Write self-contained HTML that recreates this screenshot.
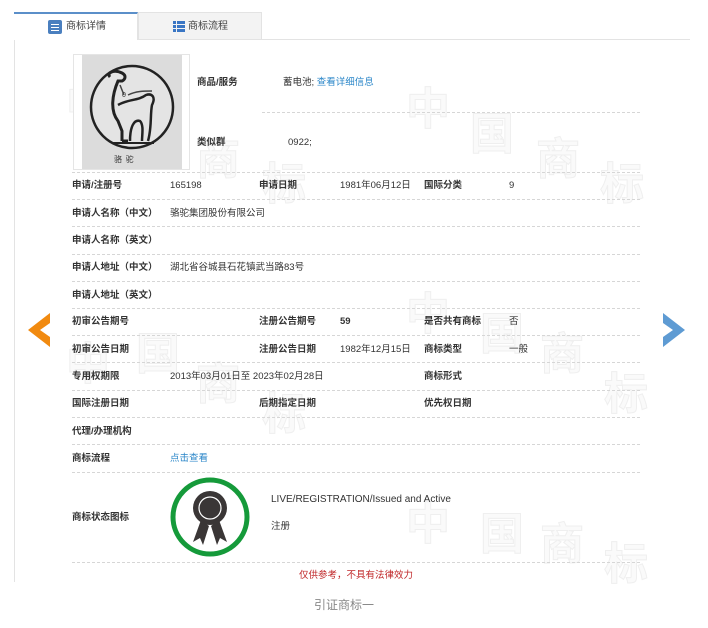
<!DOCTYPE html>
<html><head><meta charset="utf-8"><style>
*{margin:0;padding:0;box-sizing:border-box}
body{width:708px;height:628px;background:#fff;font-family:"Liberation Sans","Noto Sans CJK SC",sans-serif;font-size:9.5px;color:#333;position:relative;overflow:hidden}
.a{position:absolute;white-space:nowrap;line-height:13px}
.b{font-weight:bold;color:#333}
.l{position:absolute;border-top:1px dashed #d6d6d6;height:0}
.wm{position:absolute;color:#fafafa;font-size:44px;font-weight:bold;line-height:50px;-webkit-text-stroke:1px #efefef}
</style></head><body>
<div class="a" style="left:14px;top:39px;width:676px;height:543px;border-left:1px solid #e3e3e3;border-top:1px solid #e3e3e3;background:#fff"></div>
<div class="wm" style="left:66px;top:80px">中</div>
<div class="wm" style="left:130px;top:110px">国</div>
<div class="wm" style="left:196px;top:135px">商</div>
<div class="wm" style="left:262px;top:160px">标</div>
<div class="wm" style="left:406px;top:85px">中</div>
<div class="wm" style="left:470px;top:110px">国</div>
<div class="wm" style="left:536px;top:135px">商</div>
<div class="wm" style="left:600px;top:160px">标</div>
<div class="wm" style="left:66px;top:340px">中</div>
<div class="wm" style="left:136px;top:330px">国</div>
<div class="wm" style="left:196px;top:360px">商</div>
<div class="wm" style="left:262px;top:390px">标</div>
<div class="wm" style="left:406px;top:290px">中</div>
<div class="wm" style="left:480px;top:310px">国</div>
<div class="wm" style="left:540px;top:330px">商</div>
<div class="wm" style="left:604px;top:370px">标</div>
<div class="wm" style="left:406px;top:500px">中</div>
<div class="wm" style="left:480px;top:510px">国</div>
<div class="wm" style="left:540px;top:520px">商</div>
<div class="wm" style="left:604px;top:540px">标</div>
<!-- tabs -->
<div class="a" style="left:14px;top:12px;width:124px;height:28px;background:#fff;border-top:2px solid #5b8fc9;border-right:1px solid #e3e3e3"></div>
<div class="a" style="left:138px;top:12px;width:124px;height:27px;background:#f3f3f3;border:1px solid #e3e3e3;border-bottom:none"></div>
<div class="a" style="left:48px;top:20px;width:14px;height:14px;background:#4a7fbf;border-radius:2px"></div>
<div class="a" style="left:51px;top:24px;width:8px;height:1px;background:#fff;box-shadow:0 3px 0 #fff,0 6px 0 #fff"></div>
<div class="a" style="left:66px;top:20px;font-size:10px;color:#444">商标详情</div>
<div class="a" style="left:173px;top:21px;width:12px;height:11px;background:repeating-linear-gradient(#3a76c4 0 3px,transparent 3px 4px)"></div>
<div class="a" style="left:176px;top:21px;width:1px;height:11px;background:#f3f3f3"></div>
<div class="a" style="left:188px;top:20px;font-size:10px;color:#444">商标流程</div>
<!-- image -->
<div class="a" style="left:73px;top:54px;width:117px;height:116px;border:1px solid #e5e5e5;background:#fff"></div>
<div class="a" style="left:82px;top:55px;width:100px;height:114px;background:#dcdcdc"></div>
<svg class="a" style="left:82px;top:55px" width="100" height="114"><circle cx="50" cy="52" r="41" fill="#e4e4e4" stroke="#222" stroke-width="2.5"/>
<path d="M28 22 C24 18 32 14 40 18 C44 20 44 24 40 26 L36 26 C30 40 28 56 36 66 L40 76 L40 86 M40 86 L46 86" fill="none" stroke="#222" stroke-width="3"/>
<path d="M36 50 C46 44 56 46 64 40 C70 38 74 42 70 50 C68 60 70 72 66 86 M48 86 C48 72 52 64 58 66 C62 70 60 80 60 86" fill="none" stroke="#222" stroke-width="2.5"/>
<path d="M38 30 L42 40 M46 40 C54 36 62 36 70 36" fill="none" stroke="#444" stroke-width="1.5"/>
<text x="40" y="42" font-size="7" fill="#333">0</text>
<path d="M30 88 L72 88" stroke="#222" stroke-width="2"/>
<text x="32" y="107" font-size="8" fill="#333" font-family="Noto Sans CJK SC">骆 &#160;驼</text></svg>
<!-- lines -->
<div class="l" style="left:262px;top:112px;width:378px"></div>
<div class="l" style="left:72px;top:172px;width:568px"></div>
<div class="l" style="left:72px;top:199px;width:568px"></div>
<div class="l" style="left:72px;top:226px;width:568px"></div>
<div class="l" style="left:72px;top:254px;width:568px"></div>
<div class="l" style="left:72px;top:281px;width:568px"></div>
<div class="l" style="left:72px;top:308px;width:568px"></div>
<div class="l" style="left:72px;top:335px;width:568px"></div>
<div class="l" style="left:72px;top:362px;width:568px"></div>
<div class="l" style="left:72px;top:390px;width:568px"></div>
<div class="l" style="left:72px;top:417px;width:568px"></div>
<div class="l" style="left:72px;top:444px;width:568px"></div>
<div class="l" style="left:72px;top:472px;width:568px"></div>
<div class="l" style="left:72px;top:562px;width:568px"></div>
<div class="a b" style="left:197px;top:76px">商品/服务</div>
<div class="a" style="left:283px;top:76px">蓄电池; <span style="color:#2a86c8">查看详细信息</span></div>
<div class="a b" style="left:197px;top:136px">类似群</div>
<div class="a" style="left:288px;top:136px">0922;</div>
<div class="a b" style="left:72px;top:179px">申请/注册号</div><div class="a" style="left:170px;top:179px">165198</div>
<div class="a b" style="left:259px;top:179px">申请日期</div><div class="a" style="left:340px;top:179px">1981年06月12日</div>
<div class="a b" style="left:424px;top:179px">国际分类</div><div class="a" style="left:509px;top:179px">9</div>
<div class="a b" style="left:72px;top:207px">申请人名称（中文）</div><div class="a" style="left:170px;top:207px">骆驼集团股份有限公司</div>
<div class="a b" style="left:72px;top:234px">申请人名称（英文）</div>
<div class="a b" style="left:72px;top:261px">申请人地址（中文）</div><div class="a" style="left:170px;top:261px">湖北省谷城县石花镇武当路83号</div>
<div class="a b" style="left:72px;top:289px">申请人地址（英文）</div>
<div class="a b" style="left:72px;top:315px">初审公告期号</div>
<div class="a b" style="left:259px;top:315px">注册公告期号</div><div class="a b" style="left:340px;top:315px">59</div>
<div class="a b" style="left:424px;top:315px">是否共有商标</div><div class="a" style="left:509px;top:315px">否</div>
<div class="a b" style="left:72px;top:343px">初审公告日期</div>
<div class="a b" style="left:259px;top:343px">注册公告日期</div><div class="a" style="left:340px;top:343px">1982年12月15日</div>
<div class="a b" style="left:424px;top:343px">商标类型</div><div class="a" style="left:509px;top:343px">一般</div>
<div class="a b" style="left:72px;top:370px">专用权期限</div><div class="a" style="left:170px;top:370px">2013年03月01日至 2023年02月28日</div>
<div class="a b" style="left:424px;top:370px">商标形式</div>
<div class="a b" style="left:72px;top:397px">国际注册日期</div>
<div class="a b" style="left:259px;top:397px">后期指定日期</div>
<div class="a b" style="left:424px;top:397px">优先权日期</div>
<div class="a b" style="left:72px;top:425px">代理/办理机构</div>
<div class="a b" style="left:72px;top:452px">商标流程</div><div class="a" style="left:170px;top:452px;color:#2a86c8">点击查看</div>
<div class="a b" style="left:72px;top:511px">商标状态图标</div>
<svg class="a" style="left:169px;top:476px" width="82" height="82"><circle cx="41" cy="41" r="37" fill="#fff" stroke="#159a3a" stroke-width="5"/><path d="M32 44 L24 66 L31 62 L34 69 L40 50 Z M50 44 L58 66 L51 62 L48 69 L42 50 Z" fill="#3a3636"/><circle cx="41" cy="32" r="17" fill="#3a3636"/><circle cx="41" cy="32" r="11" fill="#3a3636" stroke="#fff" stroke-width="1.2"/></svg>
<div class="a" style="left:271px;top:493px;font-size:10px">LIVE/REGISTRATION/Issued and Active</div>
<div class="a" style="left:271px;top:520px">注册</div>
<div class="a" style="left:299px;top:569px;color:#c0282a">仅供参考，不具有法律效力</div>
<div class="a" style="left:314px;top:597px;font-size:12px;line-height:16px;color:#888">引证商标一</div>
<!-- arrows -->
<svg class="a" style="left:28px;top:313px" width="24" height="34"><path d="M22 0 L0 17 L22 34 L22 24 L12 17 L22 10 Z" fill="#f18a10"/></svg>
<svg class="a" style="left:661px;top:313px" width="24" height="34"><path d="M2 0 L24 17 L2 34 L2 24 L12 17 L2 10 Z" fill="#5e9bd3"/></svg>
</body></html>
